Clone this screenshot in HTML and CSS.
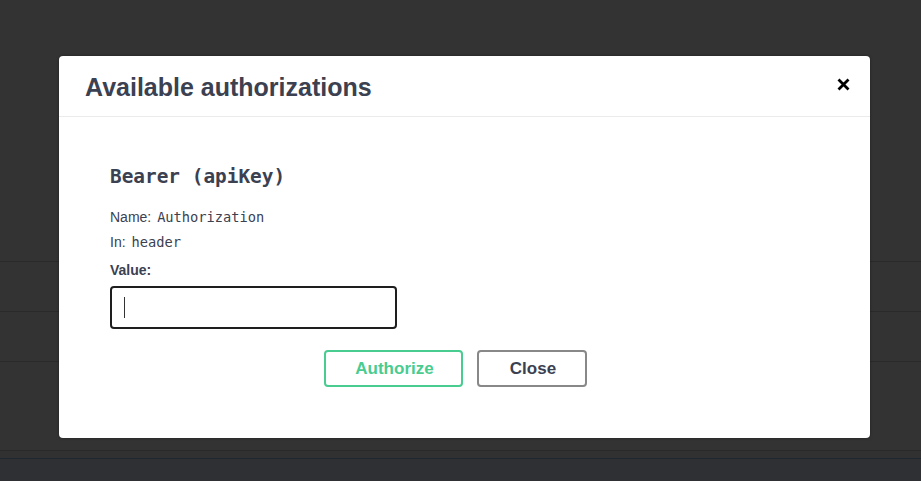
FILE: index.html
```html
<!DOCTYPE html>
<html>
<head>
<meta charset="utf-8">
<link rel="stylesheet" href="styles.css">
</head>
<body>
<div class="page">
  <div class="top"></div>
  <div class="row"></div>
  <div class="row"></div>
  <div class="row tall"></div>
  <div class="strip"></div>
  <div class="footer"></div>
</div>
<div class="modal">
  <div class="modal-header">
    <h3 class="title">Available authorizations</h3>
    <button class="close-x" aria-label="close">
      <svg width="13" height="13" viewBox="0 0 13 13"><path d="M1.5 1.5 L11.5 11.5 M11.5 1.5 L1.5 11.5" stroke="#000" stroke-width="2.8" stroke-linecap="butt"/></svg>
    </button>
  </div>
  <div class="modal-body">
    <h4 class="scheme">Bearer (apiKey)</h4>
    <div class="meta">Name: <code>Authorization</code></div>
    <div class="meta">In: <code>header</code></div>
    <label class="value-label">Value:</label>
    <div class="input"><span class="caret"></span></div>
    <div class="btns">
      <button class="btn authorize">Authorize</button>
      <button class="btn close">Close</button>
    </div>
  </div>
</div>
</body>
</html>
```
FILE: styles.css
```css
html, body {
  margin: 0;
  padding: 0;
  background: #333333;
  width: 921px;
  height: 481px;
  overflow: hidden;
  font-family: "Liberation Sans", Arial, sans-serif;
}
.page {
  display: flex;
  flex-direction: column;
}
.top {
  height: 261px;
  border-bottom: 1px solid #2a2a2a;
}
.row {
  height: 49px;
  border-bottom: 1px solid #2a2a2a;
}
.row.tall {
  height: 88px;
  border-bottom: 1px solid #292929;
}
.strip {
  height: 7px;
  background: #313131;
  border-bottom: 1px solid #1e2730;
}
.footer {
  height: 30px;
  background: #2e3033;
}
.modal {
  position: absolute;
  left: 59px;
  top: 56px;
  width: 811px;
  height: 382px;
  background: #fff;
  border-radius: 4px;
  box-shadow: 0 0 3px rgba(0, 0, 0, 0.35);
}
.modal-header {
  height: 61px;
  box-sizing: border-box;
  border-bottom: 1px solid #ebebeb;
  display: flex;
  align-items: center;
  justify-content: space-between;
  padding: 2px 20px 0 26px;
}
.title {
  margin: 0;
  font-size: 25px;
  font-weight: bold;
  color: #3b4151;
}
.close-x {
  border: 0;
  background: none;
  padding: 0;
  width: 13px;
  height: 13px;
  display: flex;
  margin-bottom: 6px;
}
.modal-body {
  padding: 46px 0 0 51px;
}
.scheme {
  margin: 0 0 14px;
  font-family: "DejaVu Sans Mono", monospace;
  font-size: 19.4px;
  font-weight: bold;
  color: #3b4151;
  white-space: pre;
  line-height: 28px;
}
.meta {
  font-size: 14px;
  color: #3b4151;
  line-height: 25px;
}
.meta code {
  font-family: "DejaVu Sans Mono", monospace;
  font-size: 13.7px;
  margin-left: 2px;
}
.value-label {
  display: block;
  margin-top: 5px;
  font-size: 14px;
  font-weight: bold;
  color: #3b4151;
  line-height: 20px;
}
.input {
  margin-top: 6px;
  width: 287px;
  height: 43px;
  box-sizing: border-box;
  border: 2px solid #1e1e1e;
  border-radius: 4px;
  display: flex;
  align-items: center;
  padding-left: 12px;
}
.caret {
  width: 1px;
  height: 21px;
  background: #333;
}
.btns {
  display: flex;
  justify-content: center;
  gap: 14px;
  margin-top: 21px;
  margin-left: -51px;
  padding-right: 18px;
}
.btn {
  height: 37px;
  box-sizing: border-box;
  background: #fff;
  border-radius: 4px;
  font-family: "Liberation Sans", Arial, sans-serif;
  font-size: 17px;
  font-weight: bold;
  padding: 0 0 0 2px;
}
.authorize {
  width: 139px;
  border: 2px solid #49cc90;
  color: #49cc90;
}
.close {
  width: 110px;
  border: 2px solid #888888;
  color: #3b4151;
}
```
